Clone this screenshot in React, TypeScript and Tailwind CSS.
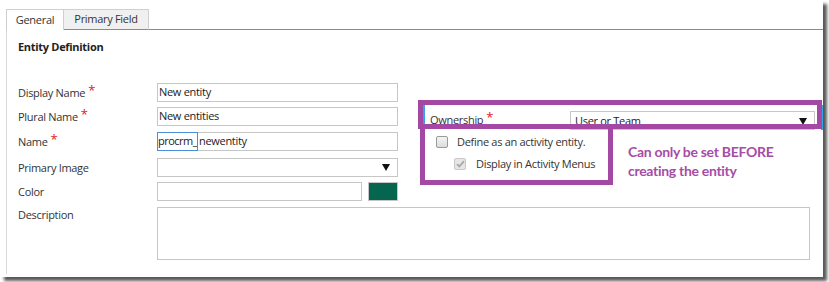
import React from "react";

const Star = () => <span className="text-[#e4161d] text-[13px] leading-none relative top-[-3px] ml-[3px]">*</span>;

const Arrow = () => (
  <svg width="8" height="7" viewBox="0 0 8 7" className="shrink-0">
    <path d="M0 0 H8 L4 7 Z" fill="#111" />
  </svg>
);

const Label = ({ children, star }: { children: React.ReactNode; star?: boolean }) => (
  <div className="w-[139px] shrink-0 flex items-center h-[19px] pt-[1px] text-[#333]">
    <span>{children}</span>
    {star && <Star />}
  </div>
);

const Input = ({ value, w = "w-[241px]" }: { value?: string; w?: string }) => (
  <div className={`${w} h-[19px] border border-[#c6c6c6] bg-white flex items-center px-[1px] text-[#222]`}>{value}</div>
);

export default function App() {
  return (
    <div className="w-[829px] h-[282px] bg-white font-['Open_Sans',sans-serif] text-[11px] tracking-[-0.3px] relative overflow-hidden">
      <div className="w-[823px] h-[277px] bg-white shadow-[4px_4px_3px_rgba(0,0,0,0.65)] flex flex-col pl-[6px] pt-[9px] pb-[3px]">
        {/* Tabs */}
        <div className="flex h-[21px] shrink-0">
          <div className="w-[58px] border-l border-t border-r border-[#cfcfcf] bg-white flex items-center justify-center text-[#333]">General</div>
          <div className="w-[85px] border-t border-r border-[#cfcfcf] border-b border-b-[#8a8a8a] bg-[#f0f0f0] flex items-center justify-center text-[#333]">Primary Field</div>
          <div className="flex-1 border-b border-[#8a8a8a]" />
        </div>
        {/* Body */}
        <div className="flex-1 border-l border-[#d9d9d9] pl-[11px] pt-[9px] flex flex-col">
          <div className="font-bold text-[#222] leading-[16px]">Entity Definition</div>
          <div className="flex mt-[28px]">
            {/* Left column */}
            <div className="w-[380px] shrink-0 flex flex-col">
              <div className="flex">
                <Label star>Display Name</Label>
                <Input value="New entity" />
              </div>
              <div className="flex mt-[5px]">
                <Label star>Plural Name</Label>
                <Input value="New entities" />
              </div>
              <div className="flex mt-[6px]">
                <Label star>Name</Label>
                <div className="w-[41px] h-[19px] border border-[#4a90d9] flex items-center pl-0 tracking-[-0.5px] text-[#222] overflow-hidden">procrm_</div>
                <div className="w-[200px] h-[19px] border border-l-0 border-[#c6c6c6] flex items-center pl-[1px] text-[#222]">newentity</div>
              </div>
              <div className="flex mt-[7px]">
                <Label>Primary Image</Label>
                <div className="w-[241px] h-[19px] border border-[#c6c6c6] flex items-center justify-end pr-[7px]">
                  <Arrow />
                </div>
              </div>
              <div className="flex mt-[5px]">
                <Label>Color</Label>
                <Input value="" w="w-[205px]" />
                <div className="w-[30px] h-[19px] ml-[6px] bg-[#04664f] border border-[#c6c6c6]" />
              </div>
            </div>
            {/* Right column */}
            <div className="ml-[20px] flex-1 flex flex-col">
              <div className="mt-[22px] ml-[5px] h-[25px] border-l-2 border-r-2 border-[#35a3e8] flex items-start pl-[5px] pr-[6px]">
                <div className="w-[140px] h-[19px] mt-[6px] flex items-center text-[#333]">
                  <span>Ownership</span>
                  <Star />
                </div>
                <div className="flex-1 h-[19px] mt-[6px] border border-[#c6c6c6] flex items-center justify-between pl-[4px] pr-[7px] pt-[2px] text-[#222]">
                  <span>User or Team</span>
                  <Arrow />
                </div>
              </div>
              <div className="flex">
                <div className="w-[210px] shrink-0 flex flex-col">
                  <div className="flex items-center mt-[6px] ml-[18px] h-[12px]">
                    <span className="w-[12px] h-[12px] border border-[#9a9a9a] rounded-[2px] bg-[linear-gradient(#f4f4f4,#dcdcdc)]" />
                    <span className="ml-[9px] text-[#333]">Define as an activity entity.</span>
                  </div>
                  <div className="flex items-center mt-[10px] ml-[36px] h-[12px]">
                    <span className="w-[12px] h-[12px] border border-[#c8c8c8] rounded-[2px] bg-[#e6e6e6] flex items-center justify-center">
                      <svg width="9" height="8" viewBox="0 0 9 8">
                        <path d="M1 4.2 L3.4 6.5 L8 1.2" stroke="#a8a8a8" strokeWidth="1.8" fill="none" />
                      </svg>
                    </span>
                    <span className="ml-[10px] text-[#333]">Display in Activity Menus</span>
                  </div>
                </div>
                <div className="mt-[12px] font-['Lato',sans-serif] font-bold text-[14px] tracking-[-0.3px] leading-[19px] text-[#a64ca6]">
                  <div>Can only be set BEFORE</div>
                  <div>creating the entity</div>
                </div>
              </div>
            </div>
          </div>
          <div className="flex mt-[6px]">
            <div className="w-[139px] shrink-0 leading-[16px] text-[#333]">Description</div>
            <div className="w-[653px] h-[53px] border border-[#c6c6c6]" />
          </div>
        </div>
      </div>
      {/* Annotation boxes */}
      <div className="absolute left-[418px] top-[100px] w-[404px] h-[29px] border-[5px] border-[#a349a4]" />
      <div className="absolute left-[420px] top-[124px] w-[193px] h-[61px] border-[5px] border-[#a349a4]" />
    </div>
  );
}
